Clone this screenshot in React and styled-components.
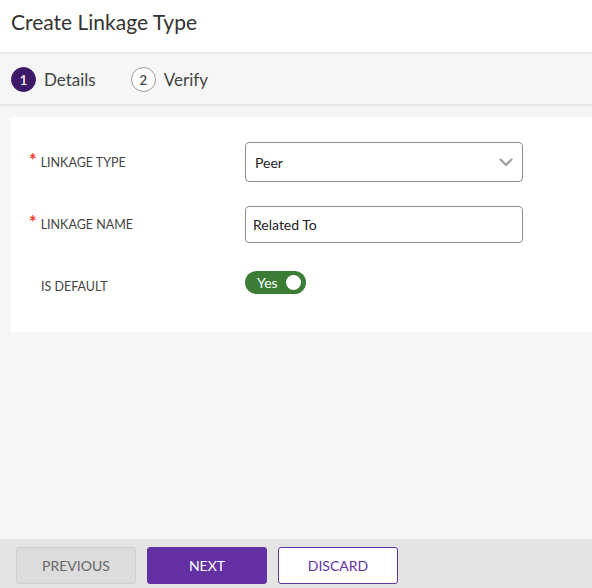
import React from "react";
import styled, { createGlobalStyle } from "styled-components";

const Global = createGlobalStyle`
  html, body { margin: 0; padding: 0; }
  body { font-family: Lato, "Noto Sans", sans-serif; background: #f6f6f6; color: #333; }
  * { box-sizing: border-box; }
`;

const Page = styled.div`
  height: 588px;
  width: 592px;
  display: flex;
  flex-direction: column;
  background: #f6f6f6;
  overflow: hidden;
`;

const Header = styled.header`
  height: 52px;
  flex-shrink: 0;
  background: #fff;
  display: flex;
  align-items: center;
  padding: 0 11px 9px;
  box-shadow: 0 1px 3px rgba(0, 0, 0, 0.12);
  position: relative;
  z-index: 1;
`;

const Title = styled.h1`
  margin: 0;
  font-size: 21px;
  font-weight: 400;
  color: #333;
`;

const Stepper = styled.nav`
  height: 54px;
  flex-shrink: 0;
  display: flex;
  align-items: center;
  gap: 35px;
  padding: 3px 11px 0;
  border-bottom: 2px solid #e6e6e6;
`;

const Step = styled.div`
  display: flex;
  align-items: center;
  gap: 8px;
  font-size: 17px;
  color: #444;
`;

const StepNum = styled.span`
  width: 25px;
  height: 25px;
  border-radius: 50%;
  display: flex;
  align-items: center;
  justify-content: center;
  font-size: 13px;
  font-weight: 600;
  background: ${(p) => (p.$active ? "#3e1b69" : "#fff")};
  color: ${(p) => (p.$active ? "#fff" : "#444")};
  border: 1px solid ${(p) => (p.$active ? "#3e1b69" : "#9a9a9a")};
`;

const Body = styled.main`
  flex: 1;
  padding: 11px 0 0 11px;
`;

const Card = styled.section`
  background: #fff;
  padding: 25px 0 38px 18px;
  display: flex;
  flex-direction: column;
  gap: 24px;
`;

const Row = styled.div`
  display: grid;
  grid-template-columns: 216px 278px;
  align-items: ${(p) => (p.$top ? "start" : "center")};
  margin-top: ${(p) => p.$offset || 0}px;
`;

const Label = styled.label`
  display: flex;
  align-items: center;
  gap: 4px;
  font-size: 12.5px;
  color: #444;
  text-transform: uppercase;
  padding-left: ${(p) => (p.$required ? "0" : "12px")};
  padding-top: ${(p) => p.$drop || 0}px;
`;

const Star = styled.span`
  color: #f03a2e;
  font-size: 18px;
  font-weight: 700;
  line-height: 1;
  margin-top: -5px;
`;

const Select = styled.div`
  height: 40px;
  border: 1px solid #8c8c8c;
  border-radius: 4px;
  display: flex;
  align-items: center;
  justify-content: space-between;
  padding: 0 9px 0 9px;
  font-size: 14px;
  color: #222;
`;

const Input = styled.div`
  height: 37px;
  border: 1px solid #8c8c8c;
  border-radius: 4px;
  display: flex;
  align-items: center;
  padding: 0 7px;
  font-size: 14px;
  color: #222;
`;

const Toggle = styled.div`
  width: 61px;
  height: 23px;
  border-radius: 12px;
  background: #3b7d35;
  display: flex;
  align-items: center;
  justify-content: space-between;
  padding: 0 5px 0 12px;
  color: #fff;
  font-size: 14px;
  justify-self: start;
`;

const Knob = styled.span`
  width: 15px;
  height: 15px;
  border-radius: 50%;
  background: #fff;
`;

const Footer = styled.footer`
  height: 49px;
  flex-shrink: 0;
  background: #e4e4e4;
  display: flex;
  align-items: flex-start;
  gap: 11px;
  padding: 8px 16px 0;
`;

const Button = styled.button`
  width: 120px;
  height: 37px;
  border-radius: 3px;
  font-family: inherit;
  font-size: 14px;
  text-transform: uppercase;
  cursor: pointer;
  padding: 0 0 1px;
  background: ${(p) => (p.$variant === "primary" ? "#6431a5" : p.$variant === "outline" ? "#fff" : "#dcdcdc")};
  color: ${(p) => (p.$variant === "primary" ? "#fff" : p.$variant === "outline" ? "#6431a5" : "#666")};
  border: 1px solid ${(p) => (p.$variant === "primary" ? "#6431a5" : p.$variant === "outline" ? "#6431a5" : "#cfcfcf")};
`;

const Chevron = () => (
  <svg width="14" height="9" viewBox="0 0 14 9" fill="none">
    <path d="M1.5 1.5 L7 7 L12.5 1.5" stroke="#a0a0a0" strokeWidth="2.4" strokeLinecap="round" strokeLinejoin="round" />
  </svg>
);

export default function App() {
  return (
    <>
      <Global />
      <Page>
        <Header>
          <Title>Create Linkage Type</Title>
        </Header>
        <Stepper>
          <Step>
            <StepNum $active>1</StepNum>
            Details
          </Step>
          <Step>
            <StepNum>2</StepNum>
            Verify
          </Step>
        </Stepper>
        <Body>
          <Card>
            <Row>
              <Label $required>
                <Star>*</Star>Linkage Type
              </Label>
              <Select>
                Peer
                <Chevron />
              </Select>
            </Row>
            <Row>
              <Label $required>
                <Star>*</Star>Linkage Name
              </Label>
              <Input>Related To</Input>
            </Row>
            <Row $offset={4} $top>
              <Label $drop={8}>Is Default</Label>
              <Toggle>
                Yes
                <Knob />
              </Toggle>
            </Row>
          </Card>
        </Body>
        <Footer>
          <Button>Previous</Button>
          <Button $variant="primary">Next</Button>
          <Button $variant="outline">Discard</Button>
        </Footer>
      </Page>
    </>
  );
}
